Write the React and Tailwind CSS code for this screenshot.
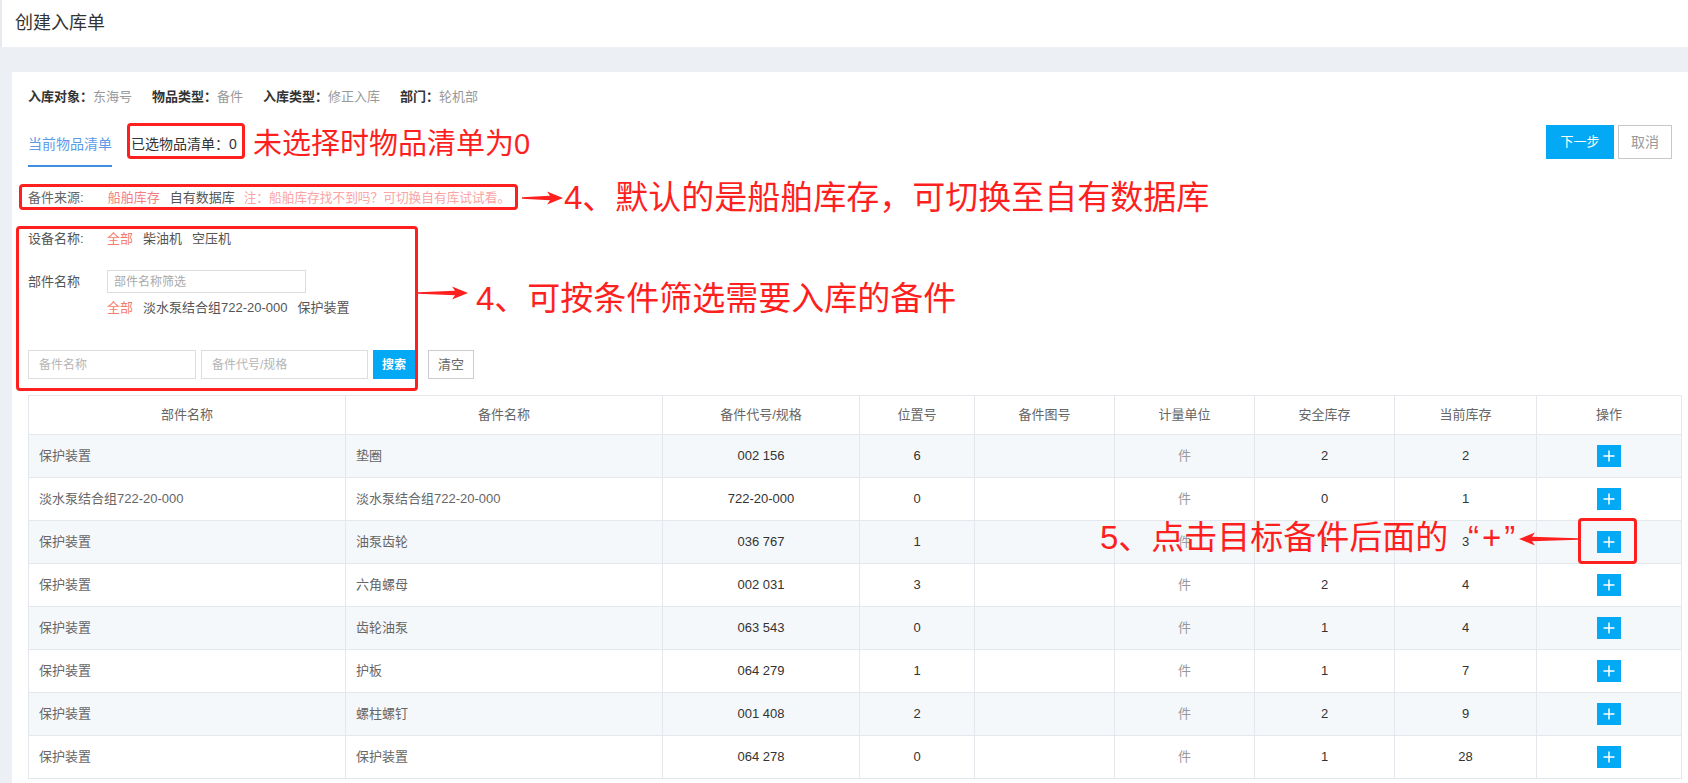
const rows = [
  ["保护装置", "垫圈", "002 156", "6", "", "件", "2", "2"],
  ["淡水泵结合组722-20-000", "淡水泵结合组722-20-000", "722-20-000", "0", "", "件", "0", "1"],
  ["保护装置", "油泵齿轮", "036 767", "1", "", "件", "1", "3"],
  ["保护装置", "六角螺母", "002 031", "3", "", "件", "2", "4"],
  ["保护装置", "齿轮油泵", "063 543", "0", "", "件", "1", "4"],
  ["保护装置", "护板", "064 279", "1", "", "件", "1", "7"],
  ["保护装置", "螺柱螺钉", "001 408", "2", "", "件", "2", "9"],
  ["保护装置", "保护装置", "064 278", "0", "", "件", "1", "28"],
];

const headers = ["部件名称", "备件名称", "备件代号/规格", "位置号", "备件图号", "计量单位", "安全库存", "当前库存", "操作"];

const info = [
  ["入库对象：", "东海号"],
  ["物品类型：", "备件"],
  ["入库类型：", "修正入库"],
  ["部门：", "轮机部"],
];

// red arrow used by the annotations
const Arrow = ({ w, className }) => (
  <svg width={w} height="14" viewBox={`0 0 ${w} 14`} className={className}>
    <polygon
      points={`0,6.3 ${w - 13},4.8 ${w - 16},0.5 ${w},7 ${w - 16},13.5 ${w - 13},9.2 0,7.7`}
      fill="#fe1f1f"
    />
  </svg>
);

const PlusBtn = () => (
  <span className="inline-flex w-[24px] h-[22px] items-center justify-center bg-[#03a9f4] align-middle">
    <svg width="12" height="12" viewBox="0 0 12 12">
      <path d="M6 0.5v11M0.5 6h11" stroke="white" strokeWidth="1.5" />
    </svg>
  </span>
);

export default function App() {
  return (
    <div className="relative w-[1688px] h-[783px] overflow-hidden bg-[#eceff3] font-['Liberation_Sans','Noto_Sans_CJK_SC',sans-serif]">
      <header className="h-[47px] bg-white flex items-center pl-[13px] border-l-2 border-[#e6e9ee] text-[18px] text-[#333]">
        创建入库单
      </header>

      <main className="pt-[25px] pl-[12px]">
        <div className="bg-white h-[711px] pl-4 pr-[7px] pt-4">
          {/* info */}
          <div className="flex items-center gap-5 text-[13px] leading-[18px]">
            {info.map(([k, v]) => (
              <div key={k}>
                <span className="font-bold text-[#333]">{k}</span>
                <span className="text-[#999]">{v}</span>
              </div>
            ))}
          </div>

          {/* tabs + actions */}
          <div className="mt-[17px] flex justify-between items-start">
            <div className="flex items-start">
              <div className="h-[44px] flex items-center border-b-2 border-[#3d8fe0] text-[14px] text-[#5b9ce8]">
                当前物品清单
              </div>
              <div className="ml-[19px] h-[42px] flex items-center text-[14px] text-[#333]">
                已选物品清单：0
              </div>
            </div>
            <div className="mt-[2px] mr-[9px] flex gap-1">
              <button className="w-[68px] h-[34px] bg-[#03a9f4] text-white text-[13px]">下一步</button>
              <button className="w-[54px] h-[34px] border border-[#c8c8c8] text-[#999] text-[14px]">取消</button>
            </div>
          </div>

          {/* source */}
          <div className="mt-[22px] flex items-center text-[13px] leading-[18px]">
            <span className="text-[#666]">备件来源:</span>
            <span className="ml-[24px] text-[#f47f7f]">船舶库存</span>
            <span className="ml-[10px] text-[#555]">自有数据库</span>
            <span className="ml-[9px] text-[12.7px] text-[#f9a5a5]">注：船舶库存找不到吗？可切换自有库试试看。</span>
          </div>

          {/* filters */}
          <div className="mt-[23px] flex items-center text-[13px] leading-[18px] text-[#555]">
            <span className="w-[79px]">设备名称:</span>
            <span className="text-[#f47c6c]">全部</span>
            <span className="ml-[10px]">柴油机</span>
            <span className="ml-[10px]">空压机</span>
          </div>
          <div className="mt-[22px] flex items-center text-[13px] leading-[18px] text-[#555]">
            <span className="w-[79px]">部件名称</span>
            <input
              readOnly
              placeholder="部件名称筛选"
              className="w-[199px] h-[23px] border border-[#ddd] px-[6px] text-[12px] outline-none placeholder:text-[#aaa]"
            />
          </div>
          <div className="mt-[6px] pl-[79px] flex items-center text-[13px] leading-[18px] text-[#555]">
            <span className="text-[#f47c6c]">全部</span>
            <span className="ml-[10px]">淡水泵结合组722-20-000</span>
            <span className="ml-[10px]">保护装置</span>
          </div>
          <div className="mt-[33px] flex items-center">
            <input
              readOnly
              placeholder="备件名称"
              className="w-[168px] h-[29px] border border-[#ddd] px-[10px] text-[12px] outline-none placeholder:text-[#b5b5b5]"
            />
            <input
              readOnly
              placeholder="备件代号/规格"
              className="ml-[5px] w-[167px] h-[29px] border border-[#ddd] px-[10px] text-[12px] outline-none placeholder:text-[#b5b5b5]"
            />
            <button className="ml-[5px] w-[42px] h-[29px] bg-[#03a9f4] text-white text-[12px] font-bold">搜索</button>
            <button className="ml-[13px] w-[46px] h-[29px] border border-[#ccc] text-[#666] text-[13px]">清空</button>
          </div>

          {/* table */}
          <table className="mt-[16px] w-full table-fixed border-collapse text-[13px]">
            <colgroup>
              <col className="w-[317px]" />
              <col className="w-[317px]" />
              <col className="w-[197px]" />
              <col className="w-[115px]" />
              <col className="w-[140px]" />
              <col className="w-[140px]" />
              <col className="w-[140px]" />
              <col className="w-[142px]" />
              <col className="w-[145px]" />
            </colgroup>
            <thead>
              <tr>
                {headers.map((h) => (
                  <th key={h} className="h-[39px] border border-[#e4e7ec] font-normal text-[#666] text-center">
                    {h}
                  </th>
                ))}
              </tr>
            </thead>
            <tbody>
              {rows.map((r, i) => (
                <tr key={i} className={i % 2 === 0 ? "bg-[#f5f8fb]" : "bg-white"}>
                  <td className="h-[43px] border border-[#e4e7ec] pl-[10px] text-[#666]">{r[0]}</td>
                  <td className="border border-[#e4e7ec] pl-[10px] text-[#666]">{r[1]}</td>
                  <td className="border border-[#e4e7ec] text-center text-[#333]">{r[2]}</td>
                  <td className="border border-[#e4e7ec] text-center text-[#333]">{r[3]}</td>
                  <td className="border border-[#e4e7ec] text-center text-[#333]">{r[4]}</td>
                  <td className="border border-[#e4e7ec] text-center text-[#999]">{r[5]}</td>
                  <td className="border border-[#e4e7ec] text-center text-[#333]">{r[6]}</td>
                  <td className="border border-[#e4e7ec] text-center text-[#333]">{r[7]}</td>
                  <td className="border border-[#e4e7ec] text-center">
                    <PlusBtn />
                  </td>
                </tr>
              ))}
            </tbody>
          </table>
        </div>
      </main>

      {/* annotations drawn over the screenshot */}
      <div className="absolute left-[127px] top-[123px] w-[118px] h-[36px] border-[3px] border-[#fe1f1f] rounded-[4px]" />
      <div className="absolute left-[253px] top-[130px] text-[29px] leading-[29px] text-[#fe1f1f] whitespace-nowrap">
        未选择时物品清单为0
      </div>

      <div className="absolute left-[19px] top-[184px] w-[499px] h-[26px] border-[3px] border-[#fe1f1f] rounded-[4px]" />
      <Arrow w={41} className="absolute left-[522px] top-[191px]" />
      <div className="absolute left-[564px] top-[181px] text-[33px] leading-[33px] text-[#fe1f1f] whitespace-nowrap">
        4、默认的是船舶库存，可切换至自有数据库
      </div>

      <div className="absolute left-[16px] top-[226px] w-[402px] h-[165px] border-[3px] border-[#fe1f1f] rounded-[4px]" />
      <Arrow w={50} className="absolute left-[418px] top-[286px]" />
      <div className="absolute left-[476px] top-[282px] text-[33px] leading-[33px] text-[#fe1f1f] whitespace-nowrap">
        4、可按条件筛选需要入库的备件
      </div>

      <div className="absolute left-[1100px] top-[521px] text-[33px] leading-[33px] text-[#fe1f1f] whitespace-nowrap">
        5、点击目标备件后面的
      </div>
      <div className="absolute left-[1468px] top-[521px] text-[33px] leading-[33px] tracking-[3px] text-[#fe1f1f] whitespace-nowrap">
        “+”
      </div>
      <Arrow w={59} className="absolute left-[1519px] top-[532px] -scale-x-100" />
      <div className="absolute left-[1578px] top-[518px] w-[59px] h-[46px] border-[3px] border-[#fe1f1f] rounded-[4px]" />
    </div>
  );
}
